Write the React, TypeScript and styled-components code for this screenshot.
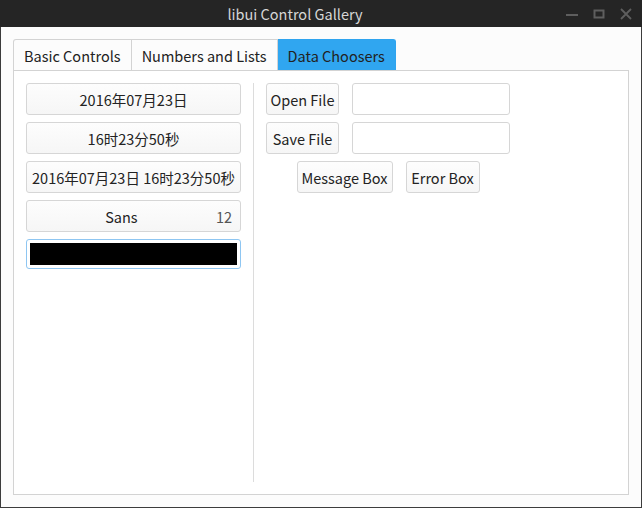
import React, { useState } from 'react';
import styled, { createGlobalStyle } from 'styled-components';

const GlobalStyle = createGlobalStyle`
  html, body {
    margin: 0;
    padding: 0;
    background: #fcfcfc;
  }
  * {
    box-sizing: border-box;
  }
`;

// Noto Sans CJK carries Source Sans style latin glyphs, close to the reference
const FONT = `"Noto Sans CJK SC", Lato, sans-serif`;

const Window = styled.div`
  width: 642px;
  height: 508px;
  border: 1px solid #3c3c3c;
  border-top: none;
  background: #fcfcfc;
  display: flex;
  flex-direction: column;
  font-family: ${FONT};
  color: #232323;
`;

const TitleBar = styled.div`
  height: 27px;
  margin: 0 -1px;
  background: #252525;
  display: flex;
  align-items: center;
`;

const Title = styled.div`
  flex: 1;
  text-align: center;
  color: #d6d6d6;
  font-size: 14.5px;
`;

const WindowControls = styled.div`
  width: 52px;
  padding-right: 9px;
  display: flex;
  align-items: center;
  justify-content: flex-end;
  gap: 13px;
`;

const ControlIcon = styled.svg`
  flex-shrink: 0;
`;

const Body = styled.div`
  flex: 1;
  display: flex;
  flex-direction: column;
  padding: 12px;
`;

const TabBar = styled.div`
  display: flex;
  height: 31px;
`;

const Tab = styled.div<{ $active?: boolean; $first?: boolean; $last?: boolean }>`
  height: 31px;
  padding: 0 10px;
  display: flex;
  align-items: center;
  font-size: 14.5px;
  border: 1px solid ${p => (p.$active ? '#2fa4ef' : '#d3d3d3')};
  border-bottom: none;
  border-left-width: ${p => (p.$first ? '1px' : '0')};
  border-radius: ${p => (p.$first ? '3px 0 0 0' : p.$last ? '0 3px 0 0' : '0')};
  background: ${p => (p.$active ? '#30a6f0' : '#fcfcfc')};
  color: #222;
`;

const Panel = styled.div`
  flex: 1;
  background: #ffffff;
  border: 1px solid #d3d3d3;
  padding: 12px;
  display: flex;
  gap: 12px;
`;

const LeftColumn = styled.div`
  width: 215px;
  display: flex;
  flex-direction: column;
  gap: 7px;
`;

const Separator = styled.div`
  width: 1px;
  background: #dcdcdc;
`;

const RightColumn = styled.div`
  display: flex;
  flex-direction: column;
  gap: 7px;
  align-items: flex-start;
`;

const Button = styled.button<{ $width?: number }>`
  height: 32px;
  width: ${p => (p.$width ? `${p.$width}px` : 'auto')};
  padding: 0 4px;
  border: 1px solid #d6d6d6;
  border-radius: 3px;
  background: linear-gradient(#fdfdfd, #f6f6f6);
  font-family: ${FONT};
  font-size: 14.5px;
  color: #232323;
  display: flex;
  align-items: center;
  justify-content: center;
  white-space: nowrap;
`;

const FullButton = styled(Button)`
  width: 100%;
`;

const FontButton = styled(FullButton)`
  justify-content: space-between;
  padding: 0 8px 0 0;
`;

const FontName = styled.span`
  flex: 1;
  text-align: center;
`;

const FontSize = styled.span`
  color: #555;
`;

const ColorEntry = styled.div`
  height: 30px;
  border: 1px solid #8ec6f2;
  border-radius: 3px;
  padding: 3px;
  background: #fff;
`;

const ColorSwatch = styled.div<{ $color: string }>`
  height: 100%;
  background: ${p => p.$color};
`;

const FileGrid = styled.div`
  display: grid;
  grid-template-columns: 73px 158px;
  column-gap: 13px;
  row-gap: 7px;
`;

const Entry = styled.input`
  height: 32px;
  border: 1px solid #d6d6d6;
  border-radius: 3px;
  background: #fff;
  font-family: ${FONT};
  font-size: 14.5px;
  padding: 0 6px;
  outline: none;
`;

const BoxRow = styled.div`
  width: 244px;
  display: flex;
  justify-content: center;
  gap: 13px;
`;

const tabs = ['Basic Controls', 'Numbers and Lists', 'Data Choosers'];

export default function App() {
  const [active] = useState(2);
  return (
    <>
      <GlobalStyle />
      <Window>
        <TitleBar>
          <Title>libui Control Gallery</Title>
          <WindowControls>
            <ControlIcon width="14" height="14" viewBox="0 0 14 14">
              <rect x="1" y="7" width="12" height="2" fill="#5e5e5e" />
            </ControlIcon>
            <ControlIcon width="14" height="14" viewBox="0 0 14 14">
              <rect x="2.5" y="3.5" width="9" height="7" fill="none" stroke="#5e5e5e" strokeWidth="2" />
            </ControlIcon>
            <ControlIcon width="14" height="14" viewBox="0 0 14 14">
              <path d="M2 2 L12 12 M12 2 L2 12" stroke="#5e5e5e" strokeWidth="1.8" />
            </ControlIcon>
          </WindowControls>
        </TitleBar>
        <Body>
          <TabBar>
            {tabs.map((t, i) => (
              <Tab key={t} $active={i === active} $first={i === 0} $last={i === tabs.length - 1}>
                {t}
              </Tab>
            ))}
          </TabBar>
          <Panel>
            <LeftColumn>
              <FullButton>2016年07月23日</FullButton>
              <FullButton>16时23分50秒</FullButton>
              <FullButton>2016年07月23日 16时23分50秒</FullButton>
              <FontButton>
                <FontName>Sans</FontName>
                <FontSize>12</FontSize>
              </FontButton>
              <ColorEntry>
                <ColorSwatch $color="#000000" />
              </ColorEntry>
            </LeftColumn>
            <Separator />
            <RightColumn>
              <FileGrid>
                <Button $width={73}>Open File</Button>
                <Entry />
                <Button $width={73}>Save File</Button>
                <Entry />
              </FileGrid>
              <BoxRow>
                <Button $width={96}>Message Box</Button>
                <Button $width={74}>Error Box</Button>
              </BoxRow>
            </RightColumn>
          </Panel>
        </Body>
      </Window>
    </>
  );
}
